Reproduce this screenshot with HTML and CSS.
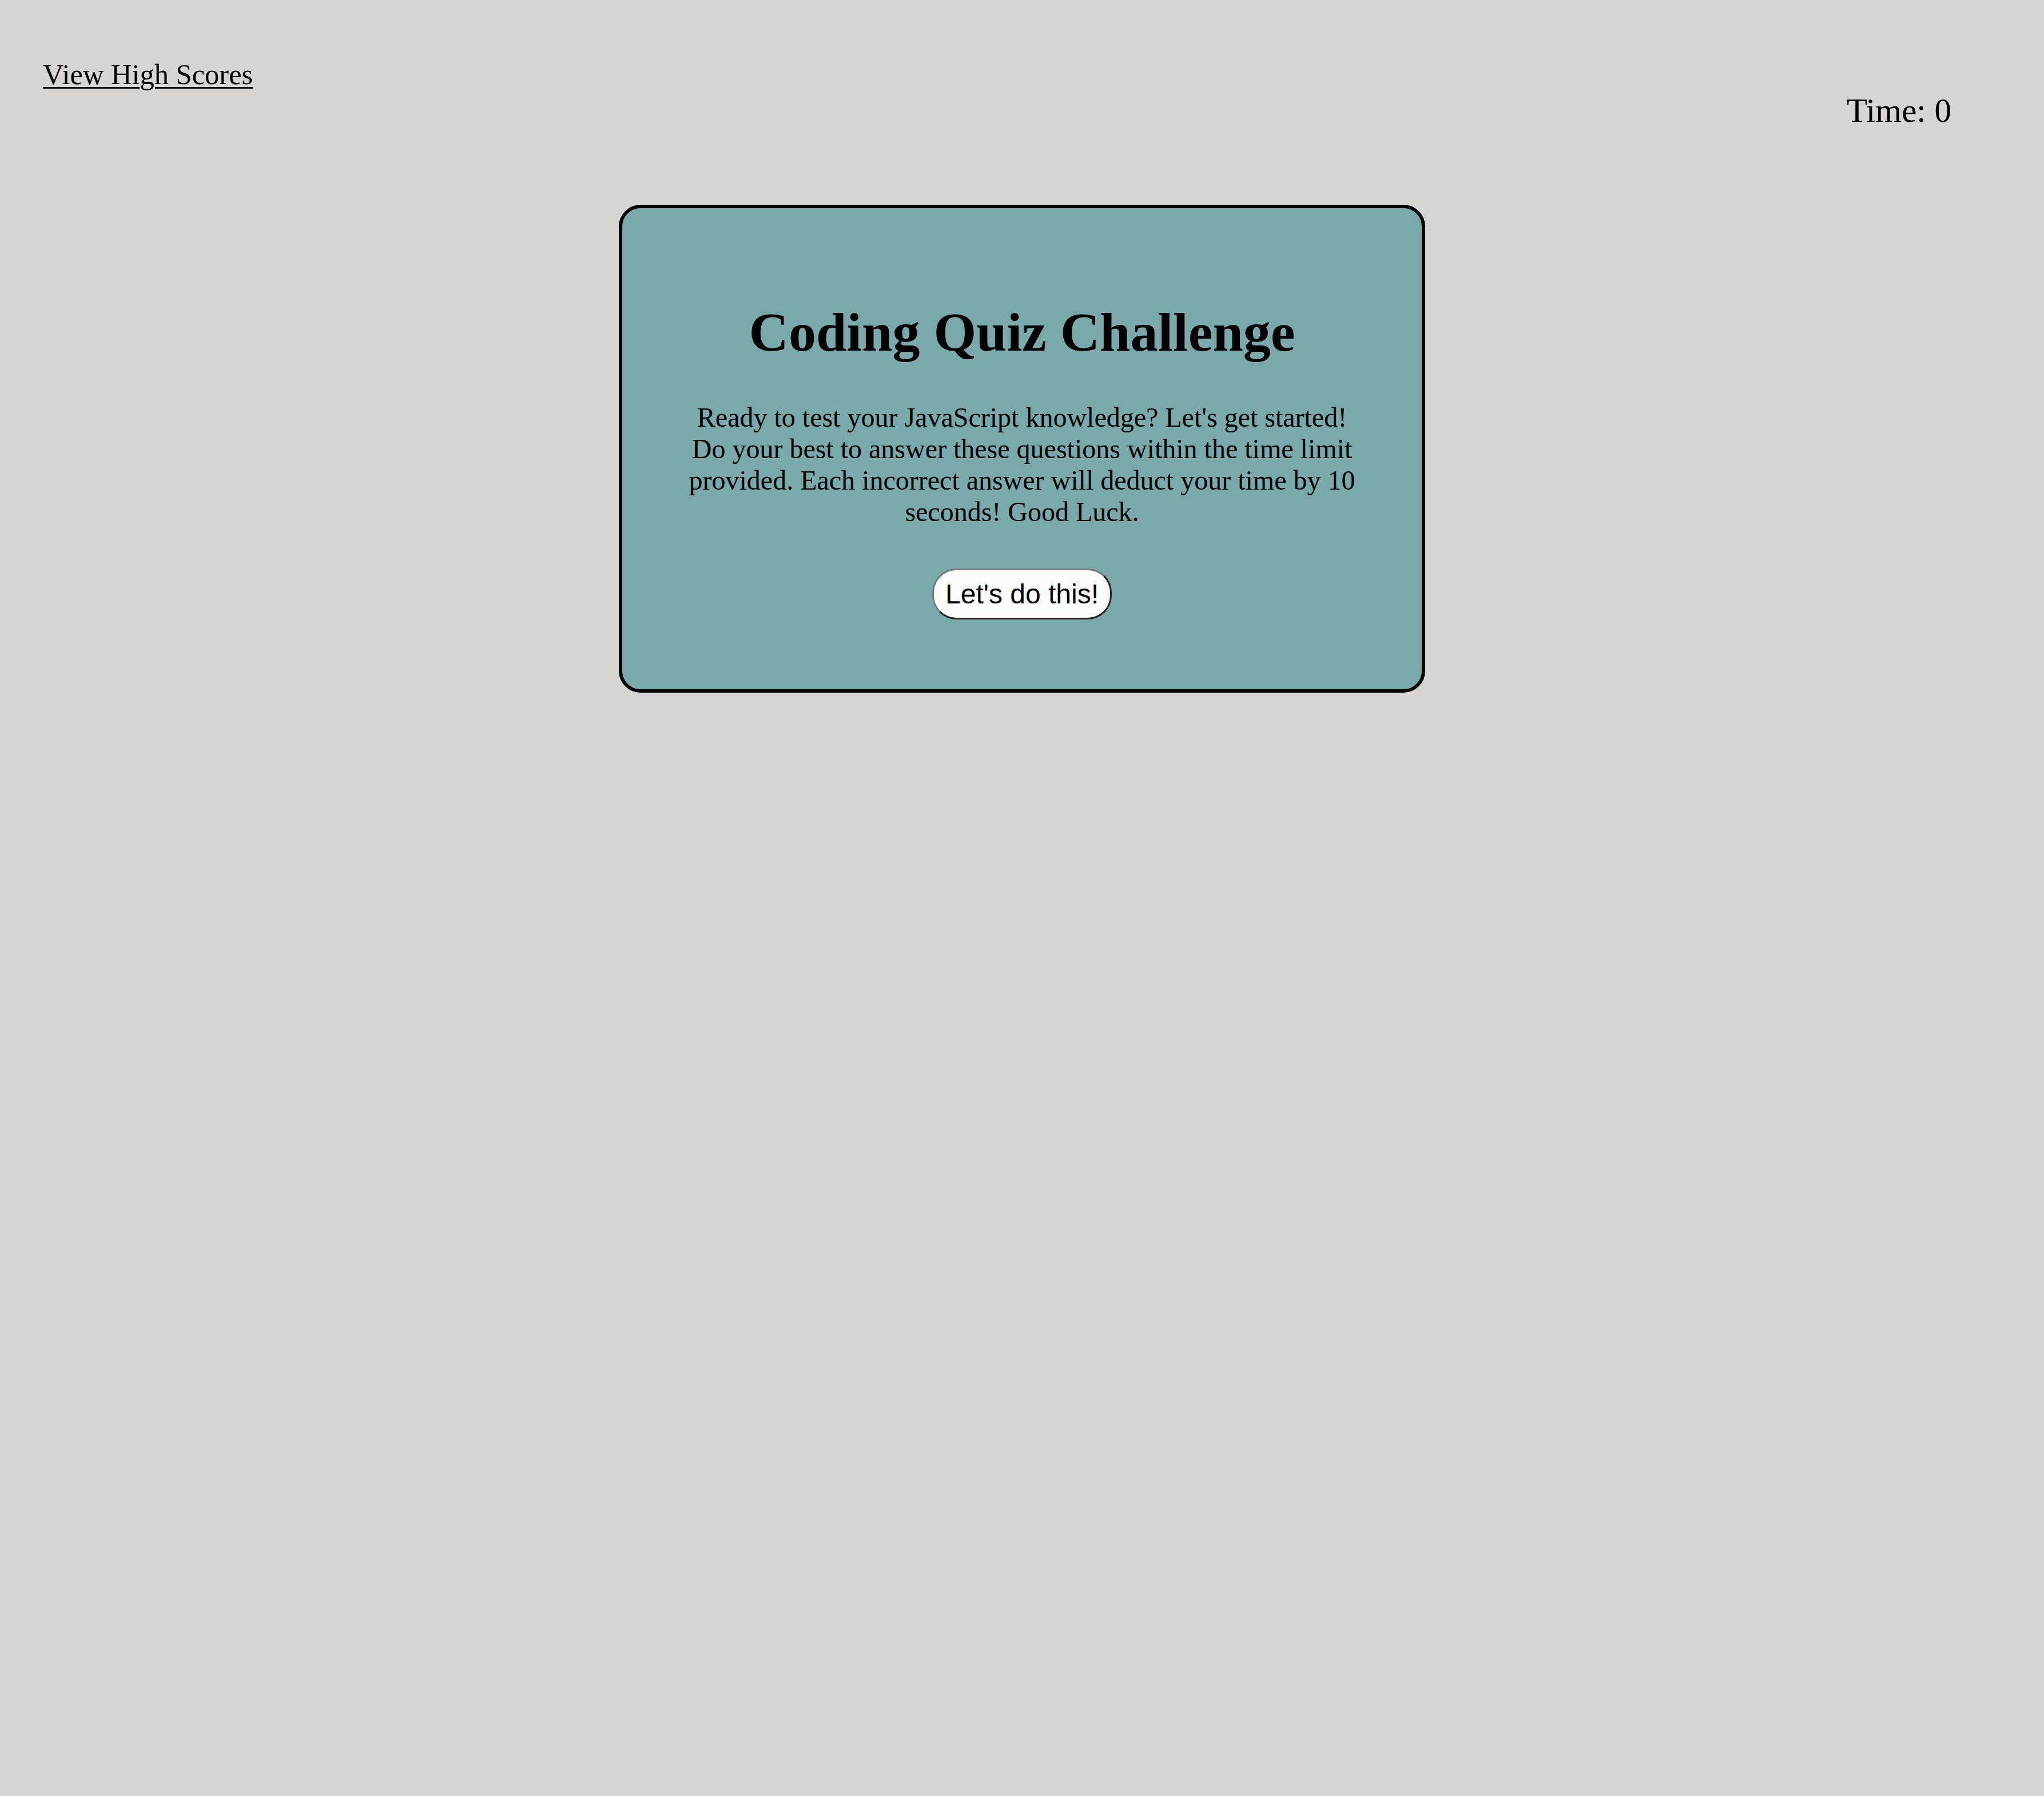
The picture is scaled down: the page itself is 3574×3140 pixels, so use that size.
FILE: index.html
```html
<!DOCTYPE html>
<html lang="en">
<head>
<meta charset="utf-8">
<title>Coding Quiz Challenge</title>
<link rel="stylesheet" href="styles.css">
</head>
<body>
<header class="top-bar">
  <a class="scores-link" href="#">View High Scores</a>
  <div class="timer">Time: 0</div>
</header>
<main class="quiz-area">
  <section class="quiz-card">
    <h1 class="quiz-title">Coding Quiz Challenge</h1>
    <p class="quiz-intro">Ready to test your JavaScript knowledge? Let's get started! Do your best to answer these questions within the time limit provided. Each incorrect answer will deduct your time by 10 seconds! Good Luck.</p>
    <button class="start-btn" type="button">Let's do this!</button>
  </section>
</main>
</body>
</html>
```
FILE: styles.css
```css
html, body {
  margin: 0;
  padding: 0;
}

body {
  background: #d6d5d3;
  color: #000;
  font-family: "Liberation Serif", "Times New Roman", serif;
  min-height: 3140px;
}

.top-bar {
  display: flex;
  justify-content: space-between;
  align-items: flex-start;
  padding: 101px 162px 0 75px;
}

.scores-link {
  font-size: 50.5px;
  line-height: normal;
  color: #000;
  text-decoration: underline;
  text-decoration-thickness: 3px;
  text-underline-offset: 5px;
}

.timer {
  font-size: 59px;
  line-height: normal;
  margin-top: 58px;
}

.quiz-area {
  display: flex;
  justify-content: center;
  margin-top: 130px;
}

.quiz-card {
  box-sizing: border-box;
  width: 1410px;
  background: #79a9aa;
  border: 6px solid #000;
  border-radius: 38px;
  padding: 161px 100px 122px;
  display: flex;
  flex-direction: column;
  align-items: center;
  text-align: center;
}

.quiz-title {
  font-size: 96px;
  font-weight: bold;
  line-height: normal;
  margin: 0 0 66px;
}

.quiz-intro {
  font-size: 48px;
  line-height: normal;
  margin: 0 0 72px;
}

.start-btn {
  font-family: "Liberation Sans", Arial, sans-serif;
  font-size: 48px;
  line-height: normal;
  color: #000;
  background: #fbfbfb;
  padding: 14px 20px;
  border-width: 3px;
  border-style: solid;
  border-color: #777 #222 #222 #777;
  border-radius: 42px;
  cursor: pointer;
}
```
